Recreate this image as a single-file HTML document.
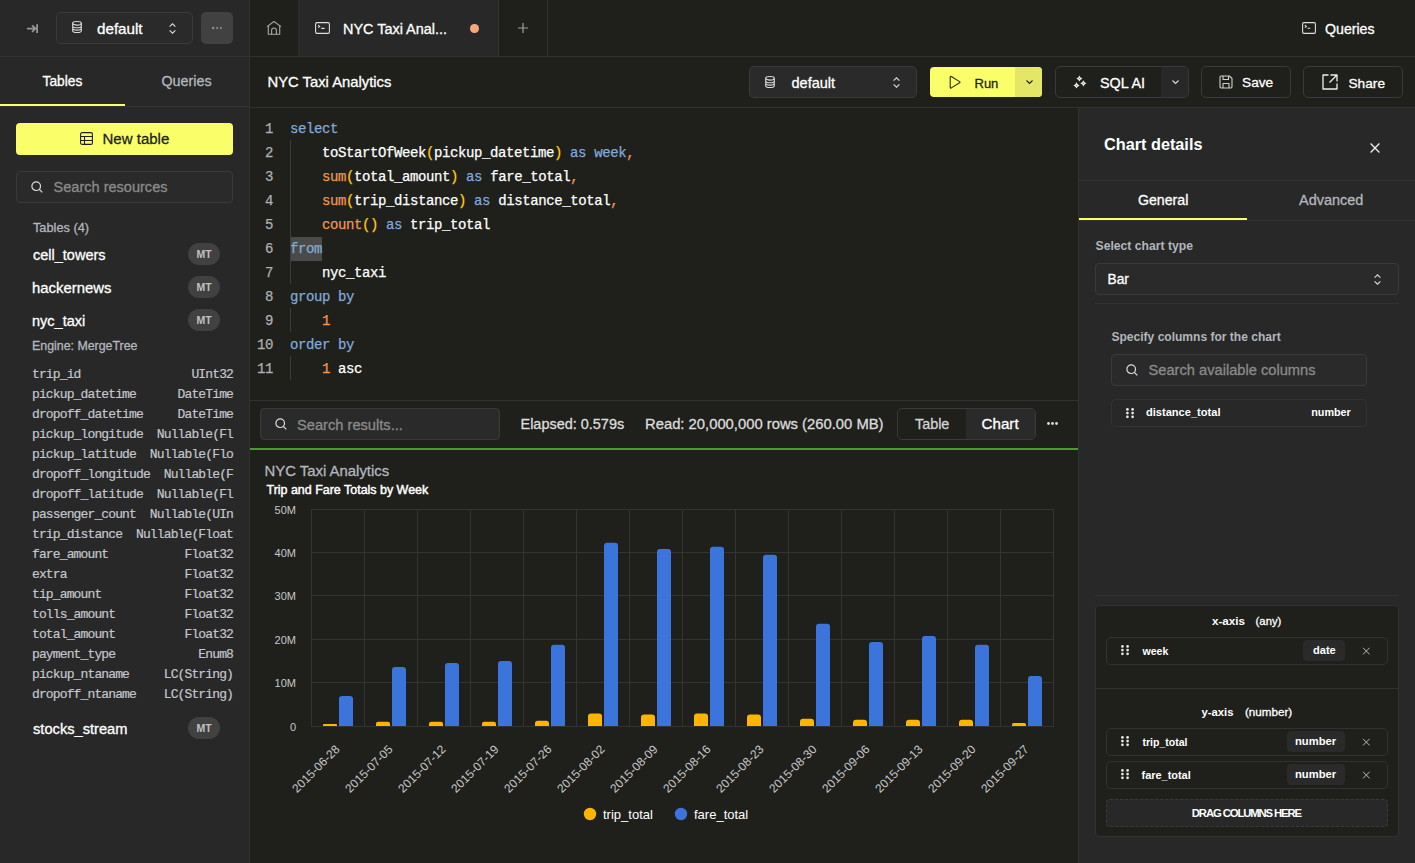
<!DOCTYPE html>
<html><head><meta charset="utf-8">
<style>
*{box-sizing:border-box;margin:0;padding:0}
html,body{width:1415px;height:863px;overflow:hidden;background:#1f1f1c;font-family:"Liberation Sans",sans-serif;color:#fff}
.a{position:absolute}
.mono{font-family:"Liberation Mono",monospace}
.t[style*="font-weight:bold"]{-webkit-text-stroke:0}
.t{position:absolute;white-space:nowrap;line-height:1;-webkit-text-stroke:0.3px currentColor}
svg{position:absolute;overflow:visible}
.mt{position:absolute;left:156px;top:0;width:32px;height:22px;border-radius:11px;background:#414141;color:#c0c0c0;font-size:10.5px;font-weight:bold;text-align:center;line-height:22px}
.col{position:absolute;left:32px;width:210px;height:16px;font-family:"Liberation Mono",monospace;font-size:13px;letter-spacing:-0.87px;line-height:16px;color:#c4c6cc;white-space:pre;-webkit-text-stroke:0.2px currentColor}
</style></head><body>

<!-- LEFT SIDEBAR -->
<div class="a" id="side" style="left:0;top:0;width:250px;height:863px;background:#282828;border-right:1px solid #323232">
  <!-- top -->
  <svg style="left:27px;top:23.5px" width="11" height="9" viewBox="0 0 11 9"><path d="M0 4.6H8.2M5.1 1.4L8.4 4.6L5.1 7.8M10.1 0.3V8.9" stroke="#959595" stroke-width="1.8" fill="none"/></svg>
  <div class="a" style="left:56px;top:12px;width:137px;height:32px;border:1px solid #3a3a3a;border-radius:5px;background:#2a2a2a"></div>
  <svg style="left:72px;top:21px" width="10" height="12" viewBox="0 0 10 12"><g stroke="#dcdcdc" stroke-width="1.1" fill="none"><ellipse cx="5" cy="2.3" rx="4.3" ry="1.8"/><path d="M0.7 2.3V9.7C0.7 10.7 2.6 11.5 5 11.5S9.3 10.7 9.3 9.7V2.3M0.7 4.9C0.7 5.9 2.6 6.7 5 6.7S9.3 5.9 9.3 4.9M0.7 7.3C0.7 8.3 2.6 9.1 5 9.1S9.3 8.3 9.3 7.3"/></g></svg>
  <div id="t1" class="t" style="left:97.0px;top:20.85px;font-size:15.18px;color:#fff">default</div>
  <svg style="left:169px;top:23px" width="7" height="11" viewBox="0 0 7 11"><path d="M0.6 3.6L3.5 0.8L6.4 3.6M0.6 7.4L3.5 10.2L6.4 7.4" stroke="#dcdcdc" stroke-width="1.1" fill="none"/></svg>
  <div class="a" style="left:201px;top:12px;width:32px;height:32px;border-radius:5px;background:#414141"></div>
  <svg style="left:210px;top:25px" width="14" height="6" viewBox="0 0 14 6"><g fill="#8e8e8e"><circle cx="3.2" cy="3" r="1.25"/><circle cx="7.1" cy="3" r="1.05"/><circle cx="10.8" cy="3" r="1.05"/></g></svg>
  <div class="a" style="left:0;top:56px;width:249px;height:1px;background:#323232"></div>

  <!-- tabs -->
  <div id="t3" class="t" style="left:42.5px;top:74.91px;font-size:13.81px;color:#fff">Tables</div>
  <div id="t4" class="t" style="left:161.5px;top:74.49px;font-size:14.31px;color:#b3b6bd">Queries</div>
  <div class="a" style="left:0;top:104px;width:125px;height:2px;background:#faff69"></div>
  <div class="a" style="left:0;top:106px;width:249px;height:1px;background:#323232"></div>

  <!-- new table -->
  <div class="a" style="left:16px;top:123px;width:217px;height:32px;border-radius:4px;background:#faff69"></div>
  <svg style="left:80px;top:132px" width="13" height="13" viewBox="0 0 13 13"><g stroke="#1f1f1c" stroke-width="1.1" fill="none"><rect x="0.6" y="0.6" width="11.8" height="11.8" rx="1.5"/><path d="M0.6 4.5H12.4M0.6 8.5H12.4M4.5 4.5V12.4"/></g></svg>
  <div id="t5" class="t" style="left:102.5px;top:131.19px;font-size:15.02px;color:#1f1f1c">New table</div>

  <!-- search -->
  <div class="a" style="left:16px;top:171px;width:217px;height:32px;border:1px solid #3a3a3a;border-radius:4px;background:#2a2a2a"></div>
  <svg style="left:31px;top:181px" width="12" height="12" viewBox="0 0 12 12"><g stroke="#dcdcdc" stroke-width="1.2" fill="none"><circle cx="5.2" cy="5.2" r="4.3"/><path d="M8.3 8.3L11.3 11.3"/></g></svg>
  <div id="t6" class="t" style="left:53.5px;top:180.17px;font-size:14.56px;color:#8a8a8a">Search resources</div>

  <div id="t7" class="t" style="left:33.0px;top:221.9px;font-size:12.76px;color:#b3b6bd">Tables (4)</div>

  <div class="a" style="left:32px;top:243px;width:189px;height:22px"><div id="t8" class="t" style="left:1.0px;top:5.43px;font-size:14.5px;color:#fff">cell_towers</div><div class="mt">MT</div></div>
  <div class="a" style="left:32px;top:276px;width:189px;height:22px"><div id="t9" class="t" style="left:-0.0px;top:4.8px;font-size:14.88px;color:#fff">hackernews</div><div class="mt">MT</div></div>
  <div class="a" style="left:32px;top:309px;width:189px;height:22px"><div id="t10" class="t" style="left:-0.0px;top:4.92px;font-size:14.51px;color:#fff">nyc_taxi</div><div class="mt">MT</div></div>
  <div id="t11" class="t" style="left:32.0px;top:340.01px;font-size:12.39px;color:#b3b6bd">Engine: MergeTree</div>
  <div class="col" style="top:367px">trip_id                UInt32</div>
  <div class="col" style="top:387px">pickup_datetime      DateTime</div>
  <div class="col" style="top:407px">dropoff_datetime     DateTime</div>
  <div class="col" style="top:427px">pickup_longitude  Nullable(Fl</div>
  <div class="col" style="top:447px">pickup_latitude  Nullable(Flo</div>
  <div class="col" style="top:467px">dropoff_longitude  Nullable(F</div>
  <div class="col" style="top:487px">dropoff_latitude  Nullable(Fl</div>
  <div class="col" style="top:507px">passenger_count  Nullable(UIn</div>
  <div class="col" style="top:527px">trip_distance  Nullable(Float</div>
  <div class="col" style="top:547px">fare_amount           Float32</div>
  <div class="col" style="top:567px">extra                 Float32</div>
  <div class="col" style="top:587px">tip_amount            Float32</div>
  <div class="col" style="top:607px">tolls_amount          Float32</div>
  <div class="col" style="top:627px">total_amount          Float32</div>
  <div class="col" style="top:647px">payment_type            Enum8</div>
  <div class="col" style="top:667px">pickup_ntaname     LC(String)</div>
  <div class="col" style="top:687px">dropoff_ntaname    LC(String)</div>
  <div class="a" style="left:32px;top:717px;width:189px;height:22px"><div id="t12" class="t" style="left:1.0px;top:5.29px;font-size:14.66px;color:#fff">stocks_stream</div><div class="mt">MT</div></div>
</div>


<!-- MAIN TOP TABS -->
<div class="a" style="left:250px;top:0;width:1165px;height:57px;border-bottom:1px solid #323232"></div>
<svg style="left:267px;top:21px" width="14" height="14" viewBox="0 0 14 14"><g stroke="#a4a4a4" stroke-width="1.15" fill="none" stroke-linejoin="round" stroke-linecap="round"><path d="M0.4 5.4L7 0.5L13.6 5.4"/><path d="M1.3 4.6V13.2H12.7V4.6"/><path d="M4.6 13.2V9.4A2.4 2.4 0 0 1 9.4 9.4V13.2"/></g></svg>
<div class="a" style="left:298px;top:0;width:201px;height:56px;background:#282828;border-left:1px solid #2e2e2e;border-right:1px solid #323232"></div>
<svg style="left:315px;top:22px" width="15" height="12" viewBox="0 0 15 12"><g stroke="#dcdcdc" stroke-width="1.1" fill="none"><rect x="0.6" y="0.6" width="13.8" height="10.8" rx="1.3"/><path d="M3.2 3.1L4.7 4.4L3.2 5.7M6.2 6.4H9.6"/></g></svg>
<div id="t13" class="t" style="left:343.0px;top:22.27px;font-size:14.45px;color:#fff">NYC Taxi Anal...</div>
<div class="a" style="left:470px;top:24px;width:8.5px;height:8.5px;border-radius:50%;background:#f6a77a"></div>
<svg style="left:518px;top:23px" width="10" height="10" viewBox="0 0 10 10"><path d="M5 0V10M0 5H10" stroke="#a0a0a0" stroke-width="1.2"/></svg>
<div class="a" style="left:547px;top:0;width:1px;height:56px;background:#323232"></div>
<svg style="left:1302px;top:22px" width="14" height="12" viewBox="0 0 14 12"><g stroke="#dcdcdc" stroke-width="1.1" fill="none"><rect x="0.6" y="0.6" width="12.8" height="10.8" rx="1.3"/><path d="M2.8 3.2L4.4 4.4L2.8 5.6M5.5 6.2H8.3"/></g></svg>
<div id="t14" class="t" style="left:1325.0px;top:21.51px;font-size:14.16px;color:#fff">Queries</div>

<!-- TOOLBAR -->
<div class="a" style="left:250px;top:107px;width:1165px;height:1px;background:#323232"></div>
<div id="t15" class="t" style="left:267.5px;top:75.16px;font-size:14.81px;color:#fff">NYC Taxi Analytics</div>

<div class="a" style="left:749px;top:66px;width:168px;height:32px;border:1px solid #3a3a3a;border-radius:5px;background:#2a2a2a"></div>
<svg style="left:765px;top:76px" width="10" height="12" viewBox="0 0 10 12"><g stroke="#dcdcdc" stroke-width="1.1" fill="none"><ellipse cx="5" cy="2.3" rx="4.3" ry="1.8"/><path d="M0.7 2.3V9.7C0.7 10.7 2.6 11.5 5 11.5S9.3 10.7 9.3 9.7V2.3M0.7 4.9C0.7 5.9 2.6 6.7 5 6.7S9.3 5.9 9.3 4.9M0.7 7.3C0.7 8.3 2.6 9.1 5 9.1S9.3 8.3 9.3 7.3"/></g></svg>
<div id="t16" class="t" style="left:791.5px;top:76.12px;font-size:14.51px;color:#fff">default</div>
<svg style="left:893px;top:77px" width="7" height="11" viewBox="0 0 7 11"><path d="M0.6 3.6L3.5 0.8L6.4 3.6M0.6 7.4L3.5 10.2L6.4 7.4" stroke="#dcdcdc" stroke-width="1.1" fill="none"/></svg>

<div class="a" style="left:930px;top:67px;width:112px;height:30px;border-radius:4px;background:#faff69;overflow:hidden"><div class="a" style="left:85px;top:0;width:27px;height:30px;background:#e3e666"></div></div>
<svg style="left:948.5px;top:74.5px" width="12" height="15" viewBox="0 0 12 15"><path d="M1.2 2.2Q1.2 0.9 2.3 1.5L10.6 6.6Q11.5 7.2 10.6 7.8L2.3 12.9Q1.2 13.5 1.2 12.2Z" stroke="#2a2a1f" stroke-width="1.1" fill="none" stroke-linejoin="round"/></svg>
<div id="t17" class="t" style="left:974.5px;top:76.5px;font-size:13.0px;color:#1f1f1c">Run</div>
<svg style="left:1026px;top:80px" width="7" height="4" viewBox="0 0 7 4"><path d="M0.5 0.5L3.5 3.5L6.5 0.5" stroke="#1f1f1c" stroke-width="1.1" fill="none"/></svg>

<div class="a" style="left:1055px;top:66px;width:134px;height:32px;border:1px solid #3a3a3a;border-radius:5px;overflow:hidden"><div class="a" style="left:105px;top:0;width:28px;height:30px;background:#282828"></div></div>
<svg style="left:1070px;top:72px" width="18" height="18" viewBox="0 0 18 18"><path d="M9.4 3.4Q10.15 5.75 12.5 6.5Q10.15 7.25 9.4 9.6Q8.65 7.25 6.300000000000001 6.5Q8.65 5.75 9.4 3.4Z" fill="#ececec"/><circle cx="9.4" cy="6.5" r="0.45" fill="#1f1f1c"/><path d="M13.4 8.200000000000001Q14.15 10.55 16.5 11.3Q14.15 12.05 13.4 14.4Q12.65 12.05 10.3 11.3Q12.65 10.55 13.4 8.200000000000001Z" fill="#ececec"/><circle cx="13.4" cy="11.3" r="0.45" fill="#1f1f1c"/><path d="M6.5 10.3Q7.25 12.65 9.6 13.4Q7.25 14.15 6.5 16.5Q5.75 14.15 3.4 13.4Q5.75 12.65 6.5 10.3Z" fill="#ececec"/><circle cx="6.5" cy="13.4" r="0.45" fill="#1f1f1c"/></svg>
<div id="t18" class="t" style="left:1100.0px;top:75.54px;font-size:14.36px;color:#fff">SQL AI</div>
<svg style="left:1172px;top:80px" width="7" height="4" viewBox="0 0 7 4"><path d="M0.5 0.5L3.5 3.5L6.5 0.5" stroke="#dcdcdc" stroke-width="1.1" fill="none"/></svg>

<div class="a" style="left:1201px;top:66px;width:90px;height:32px;border:1px solid #3a3a3a;border-radius:5px"></div>
<svg style="left:1219px;top:75px" width="14" height="14" viewBox="0 0 14 14"><g stroke="#cfcfcf" stroke-width="1.1" fill="none" stroke-linejoin="round"><path d="M1 2.2C1 1.5 1.5 1 2.2 1H10.5L13 3.5V11.8C13 12.5 12.5 13 11.8 13H2.2C1.5 13 1 12.5 1 11.8Z"/><path d="M4 1V4.5H9.5V1M4 13V8.5H10V13"/></g></svg>
<div id="t19" class="t" style="left:1242.0px;top:76.21px;font-size:13.69px;color:#fff">Save</div>

<div class="a" style="left:1303px;top:66px;width:100px;height:32px;border:1px solid #3a3a3a;border-radius:5px"></div>
<svg style="left:1322px;top:74px" width="16" height="16" viewBox="0 0 16 16"><g stroke="#f0f0f0" stroke-width="1.3" fill="none" stroke-linejoin="round"><path d="M6.5 1H1V15H15V9.5"/><path d="M8.5 1H15V7.5M15 1L7.5 8.5"/></g></svg>
<div id="t20" class="t" style="left:1348.5px;top:77.12px;font-size:13.68px;color:#fff">Share</div>

<!-- EDITOR -->
<div class="a mono" style="left:250px;top:117px;width:828px;height:280px;font-size:14px;letter-spacing:-0.4px;line-height:24px;color:#fff;white-space:pre;-webkit-text-stroke:0.25px currentColor">
<div class="a" style="left:0;top:0px;width:23px;text-align:right;color:#b0b0b0">1</div><div class="a" style="left:40px;top:0px"><span style="color:#82aad8">select</span></div>
<div class="a" style="left:0;top:24px;width:23px;text-align:right;color:#b0b0b0">2</div><div class="a" style="left:40px;top:24px">    toStartOfWeek<span style="color:#ffcc00">(</span>pickup_datetime<span style="color:#ffcc00">)</span> <span style="color:#82aad8">as</span> <span style="color:#82aad8">week</span><span style="color:#f09657">,</span></div>
<div class="a" style="left:0;top:48px;width:23px;text-align:right;color:#b0b0b0">3</div><div class="a" style="left:40px;top:48px">    <span style="color:#f09657">sum</span><span style="color:#ffcc00">(</span>total_amount<span style="color:#ffcc00">)</span> <span style="color:#82aad8">as</span> fare_total<span style="color:#f09657">,</span></div>
<div class="a" style="left:0;top:72px;width:23px;text-align:right;color:#b0b0b0">4</div><div class="a" style="left:40px;top:72px">    <span style="color:#f09657">sum</span><span style="color:#ffcc00">(</span>trip_distance<span style="color:#ffcc00">)</span> <span style="color:#82aad8">as</span> distance_total<span style="color:#f09657">,</span></div>
<div class="a" style="left:0;top:96px;width:23px;text-align:right;color:#b0b0b0">5</div><div class="a" style="left:40px;top:96px">    <span style="color:#f09657">count</span><span style="color:#ffcc00">()</span> <span style="color:#82aad8">as</span> trip_total</div>
<div class="a" style="left:0;top:120px;width:23px;text-align:right;color:#b0b0b0">6</div><div class="a" style="left:40px;top:120px"><span style="color:#82aad8;background:#4a4a4a;display:inline-block;height:24px;width:32px">from</span></div>
<div class="a" style="left:0;top:144px;width:23px;text-align:right;color:#b0b0b0">7</div><div class="a" style="left:40px;top:144px">    nyc_taxi</div>
<div class="a" style="left:0;top:168px;width:23px;text-align:right;color:#b0b0b0">8</div><div class="a" style="left:40px;top:168px"><span style="color:#82aad8">group by</span></div>
<div class="a" style="left:0;top:192px;width:23px;text-align:right;color:#b0b0b0">9</div><div class="a" style="left:40px;top:192px">    <span style="color:#f09657">1</span></div>
<div class="a" style="left:0;top:216px;width:23px;text-align:right;color:#b0b0b0">10</div><div class="a" style="left:40px;top:216px"><span style="color:#82aad8">order by</span></div>
<div class="a" style="left:0;top:240px;width:23px;text-align:right;color:#b0b0b0">11</div><div class="a" style="left:40px;top:240px">    <span style="color:#f09657">1</span> asc</div>
</div>
<div class="a" style="left:290px;top:140px;width:1px;height:144px;background:#3c3c3c"></div>
<div class="a" style="left:290px;top:308px;width:1px;height:24px;background:#3c3c3c"></div>
<div class="a" style="left:290px;top:356px;width:1px;height:24px;background:#3c3c3c"></div>

<!-- RESULTS BAR -->
<div class="a" style="left:250px;top:400px;width:828px;height:1px;background:#323232"></div>
<div class="a" style="left:260px;top:408px;width:240px;height:32px;border:1px solid #3a3a3a;border-radius:4px;background:#2a2a2a"></div>
<svg style="left:275px;top:418px" width="12" height="12" viewBox="0 0 12 12"><g stroke="#dcdcdc" stroke-width="1.2" fill="none"><circle cx="5.2" cy="5.2" r="4.3"/><path d="M8.3 8.3L11.3 11.3"/></g></svg>
<div id="t21" class="t" style="left:297.0px;top:418.08px;font-size:14.67px;color:#8a8a8a">Search results...</div>
<div id="t22" class="t" style="left:520.5px;top:417.26px;font-size:14.46px;color:#dcdcdc">Elapsed: 0.579s</div>
<div id="t23" class="t" style="left:645.0px;top:416.96px;font-size:14.81px;color:#dcdcdc">Read: 20,000,000 rows (260.00 MB)</div>
<div class="a" style="left:897px;top:408px;width:139px;height:32px;border:1px solid #3a3a3a;border-radius:5px;overflow:hidden"><div class="a" style="left:68px;top:0;width:70px;height:30px;background:#2a2a2a"></div></div>
<div id="t24" class="t" style="left:915.0px;top:417.33px;font-size:14.38px;color:#d4d4d4">Table</div>
<div id="t25" class="t" style="left:981.5px;top:416.23px;font-size:15.2px;color:#fff">Chart</div>
<svg style="left:1047px;top:422px" width="11" height="3" viewBox="0 0 11 3"><g fill="#dcdcdc"><circle cx="1.5" cy="1.5" r="1.4"/><circle cx="5.5" cy="1.5" r="1.4"/><circle cx="9.5" cy="1.5" r="1.4"/></g></svg>
<div class="a" style="left:250px;top:448px;width:828px;height:2px;background:#449d2c"></div>
<div class="a" style="left:1078px;top:108px;width:1px;height:755px;background:#323232"></div>

<!-- CHART -->
<div id="t26" class="t" style="left:264.5px;top:463.89px;font-size:14.9px;color:#b3b6bd">NYC Taxi Analytics</div>
<div id="t27" class="t" style="left:266.5px;top:483.75px;font-size:12.46px;color:#fff;-webkit-text-stroke:0.45px #fff">Trip and Fare Totals by Week</div>
<svg style="left:0;top:0" width="1415" height="863" viewBox="0 0 1415 863">
<g stroke="#333331" stroke-width="1" fill="none"><path d="M311.5 509V727"/><path d="M364.5 509V727"/><path d="M417.5 509V727"/><path d="M470.5 509V727"/><path d="M523.5 509V727"/><path d="M576.5 509V727"/><path d="M629.5 509V727"/><path d="M682.5 509V727"/><path d="M735.5 509V727"/><path d="M788.5 509V727"/><path d="M841.5 509V727"/><path d="M894.5 509V727"/><path d="M947.5 509V727"/><path d="M1000.5 509V727"/><path d="M1053.5 509V727"/><path d="M311 509.5H1054"/><path d="M311 552.5H1054"/><path d="M311 595.5H1054"/><path d="M311 639.5H1054"/><path d="M311 682.5H1054"/><path d="M311 726.5H1054"/></g>
<path d="M339 726V699.00Q339 696 342.00 696H350.00Q353 696 353 699.00V726Z" fill="#3b75dc"/><path d="M323 726V725.00Q323 724 324.00 724H336.00Q337 724 337 725.00V726Z" fill="#ffb400"/><path d="M392 726V669.90Q392 666.9 395.00 666.9H403.00Q406 666.9 406 669.90V726Z" fill="#3b75dc"/><path d="M376 726V723.85Q376 721.7 378.15 721.7H387.85Q390 721.7 390 723.85V726Z" fill="#ffb400"/><path d="M445 726V666.00Q445 663 448.00 663H456.00Q459 663 459 666.00V726Z" fill="#3b75dc"/><path d="M429 726V723.85Q429 721.7 431.15 721.7H440.85Q443 721.7 443 723.85V726Z" fill="#ffb400"/><path d="M498 726V664.00Q498 661 501.00 661H509.00Q512 661 512 664.00V726Z" fill="#3b75dc"/><path d="M482 726V723.85Q482 721.7 484.15 721.7H493.85Q496 721.7 496 723.85V726Z" fill="#ffb400"/><path d="M551 726V647.80Q551 644.8 554.00 644.8H562.00Q565 644.8 565 647.80V726Z" fill="#3b75dc"/><path d="M535 726V723.35Q535 720.7 537.65 720.7H546.35Q549 720.7 549 723.35V726Z" fill="#ffb400"/><path d="M604 726V545.80Q604 542.8 607.00 542.8H615.00Q618 542.8 618 545.80V726Z" fill="#3b75dc"/><path d="M588 726V716.40Q588 713.4 591.00 713.4H599.00Q602 713.4 602 716.40V726Z" fill="#ffb400"/><path d="M657 726V552.00Q657 549 660.00 549H668.00Q671 549 671 552.00V726Z" fill="#3b75dc"/><path d="M641 726V717.40Q641 714.4 644.00 714.4H652.00Q655 714.4 655 717.40V726Z" fill="#ffb400"/><path d="M710 726V549.80Q710 546.8 713.00 546.8H721.00Q724 546.8 724 549.80V726Z" fill="#3b75dc"/><path d="M694 726V716.50Q694 713.5 697.00 713.5H705.00Q708 713.5 708 716.50V726Z" fill="#ffb400"/><path d="M763 726V557.70Q763 554.7 766.00 554.7H774.00Q777 554.7 777 557.70V726Z" fill="#3b75dc"/><path d="M747 726V717.50Q747 714.5 750.00 714.5H758.00Q761 714.5 761 717.50V726Z" fill="#ffb400"/><path d="M816 726V626.70Q816 623.7 819.00 623.7H827.00Q830 623.7 830 626.70V726Z" fill="#3b75dc"/><path d="M800 726V721.80Q800 718.8 803.00 718.8H811.00Q814 718.8 814 721.80V726Z" fill="#ffb400"/><path d="M869 726V644.90Q869 641.9 872.00 641.9H880.00Q883 641.9 883 644.90V726Z" fill="#3b75dc"/><path d="M853 726V722.80Q853 719.8 856.00 719.8H864.00Q867 719.8 867 722.80V726Z" fill="#ffb400"/><path d="M922 726V638.90Q922 635.9 925.00 635.9H933.00Q936 635.9 936 638.90V726Z" fill="#3b75dc"/><path d="M906 726V722.80Q906 719.8 909.00 719.8H917.00Q920 719.8 920 722.80V726Z" fill="#ffb400"/><path d="M975 726V647.80Q975 644.8 978.00 644.8H986.00Q989 644.8 989 647.80V726Z" fill="#3b75dc"/><path d="M959 726V722.80Q959 719.8 962.00 719.8H970.00Q973 719.8 973 722.80V726Z" fill="#ffb400"/><path d="M1028 726V678.90Q1028 675.9 1031.00 675.9H1039.00Q1042 675.9 1042 678.90V726Z" fill="#3b75dc"/><path d="M1012 726V724.45Q1012 722.9 1013.55 722.9H1024.45Q1026 722.9 1026 724.45V726Z" fill="#ffb400"/>
<g font-family="Liberation Sans" font-size="11" fill="#c8c8c8" text-anchor="end"><text x="296" y="513.5">50M</text><text x="296" y="556.5">40M</text><text x="296" y="599.5">30M</text><text x="296" y="643.5">20M</text><text x="296" y="686.5">10M</text><text x="296" y="730.5">0</text></g>
<g font-family="Liberation Sans" font-size="12" fill="#c8c8c8" text-anchor="end"><text transform="translate(340.5 750) rotate(-45)">2015-06-28</text><text transform="translate(393.5 750) rotate(-45)">2015-07-05</text><text transform="translate(446.5 750) rotate(-45)">2015-07-12</text><text transform="translate(499.5 750) rotate(-45)">2015-07-19</text><text transform="translate(552.5 750) rotate(-45)">2015-07-26</text><text transform="translate(605.5 750) rotate(-45)">2015-08-02</text><text transform="translate(658.5 750) rotate(-45)">2015-08-09</text><text transform="translate(711.5 750) rotate(-45)">2015-08-16</text><text transform="translate(764.5 750) rotate(-45)">2015-08-23</text><text transform="translate(817.5 750) rotate(-45)">2015-08-30</text><text transform="translate(870.5 750) rotate(-45)">2015-09-06</text><text transform="translate(923.5 750) rotate(-45)">2015-09-13</text><text transform="translate(976.5 750) rotate(-45)">2015-09-20</text><text transform="translate(1029.5 750) rotate(-45)">2015-09-27</text></g>
<circle cx="590" cy="814" r="6.2" fill="#ffb400"/><circle cx="681" cy="814" r="6.2" fill="#3b75dc"/><g font-family="Liberation Sans" font-size="13" fill="#fff"><text x="603" y="819">trip_total</text><text x="694" y="819">fare_total</text></g></svg>


<!-- RIGHT PANEL -->
<div class="a" style="left:1079px;top:108px;width:336px;height:755px;background:#282828"></div>
<div id="t28" class="t" style="left:1104.0px;top:135.74px;font-size:16.25px;font-weight:bold;color:#fff">Chart details</div>
<svg style="left:1370px;top:143px" width="10" height="10" viewBox="0 0 10 10"><path d="M0.6 0.6L9.4 9.4M9.4 0.6L0.6 9.4" stroke="#e8e8e8" stroke-width="1.4"/></svg>
<div class="a" style="left:1079px;top:180px;width:336px;height:1px;background:#323232"></div>
<div id="t29" class="t" style="left:1138.0px;top:193.42px;font-size:14.15px;color:#fff">General</div>
<div id="t30" class="t" style="left:1299.0px;top:193.18px;font-size:14.44px;color:#b3b6bd">Advanced</div>
<div class="a" style="left:1079px;top:218px;width:168px;height:2px;background:#faff69"></div>
<div class="a" style="left:1079px;top:220px;width:336px;height:1px;background:#323232"></div>

<div id="t31" class="t" style="left:1095.5px;top:240.38px;font-size:12.19px;font-weight:bold;color:#b3b6bd">Select chart type</div>
<div class="a" style="left:1095px;top:263px;width:304px;height:32px;border:1px solid #3a3a3a;border-radius:4px;background:#2a2a2a"></div>
<div id="t32" class="t" style="left:1107.5px;top:273.14px;font-size:13.77px;color:#fff">Bar</div>
<svg style="left:1374px;top:274px" width="7" height="11" viewBox="0 0 7 11"><path d="M0.6 3.6L3.5 0.8L6.4 3.6M0.6 7.4L3.5 10.2L6.4 7.4" stroke="#dcdcdc" stroke-width="1.1" fill="none"/></svg>
<div class="a" style="left:1095px;top:303px;width:304px;height:1px;background:#323232"></div>

<div id="t33" class="t" style="left:1111.5px;top:331.11px;font-size:12.04px;font-weight:bold;color:#b3b6bd">Specify columns for the chart</div>
<div class="a" style="left:1111px;top:354px;width:256px;height:32px;border:1px solid #3a3a3a;border-radius:4px;background:#2a2a2a"></div>
<svg style="left:1126px;top:364px" width="12" height="12" viewBox="0 0 12 12"><g stroke="#dcdcdc" stroke-width="1.2" fill="none"><circle cx="5.2" cy="5.2" r="4.3"/><path d="M8.3 8.3L11.3 11.3"/></g></svg>
<div id="t34" class="t" style="left:1148.5px;top:363.49px;font-size:14.66px;color:#8a8a8a">Search available columns</div>
<div class="a" style="left:1111px;top:399px;width:256px;height:28px;border:1px solid #323232;border-radius:4px"></div>
<svg style="left:1126px;top:408px" width="8" height="11" viewBox="0 0 8 11"><g fill="#e8e8e8"><circle cx="1.4" cy="1.4" r="1.35"/><circle cx="6.6" cy="1.4" r="1.35"/><circle cx="1.4" cy="5.1" r="1.35"/><circle cx="6.6" cy="5.1" r="1.35"/><circle cx="1.4" cy="8.8" r="1.35"/><circle cx="6.6" cy="8.8" r="1.35"/></g></svg>
<div id="t35" class="t" style="left:1146.0px;top:406.72px;font-size:11.08px;font-weight:bold;color:#fff">distance_total</div>
<div id="t36" class="t" style="left:1311.2px;top:406.95px;font-size:10.81px;font-weight:bold;color:#fff">number</div>

<div class="a" style="left:1095px;top:595px;width:304px;height:1px;background:#323232"></div>
<div class="a" style="left:1095px;top:605px;width:304px;height:232px;border:1px solid #323232;border-radius:4px;background:#1f1f1c"></div>
<div id="t37" class="t" style="left:1212.0px;top:614.84px;font-size:11.65px;font-weight:bold;color:#fff">x-axis</div>
<div id="t38" class="t" style="left:1255.6px;top:615.6px;font-size:11.3px;color:#fff">(any)</div>
<div class="a" style="left:1106px;top:637px;width:282px;height:28px;border:1px solid #323232;border-radius:5px"></div>
<svg style="left:1121px;top:645px" width="8" height="11" viewBox="0 0 8 11"><g fill="#e8e8e8"><circle cx="1.4" cy="1.4" r="1.35"/><circle cx="6.6" cy="1.4" r="1.35"/><circle cx="1.4" cy="5.1" r="1.35"/><circle cx="6.6" cy="5.1" r="1.35"/><circle cx="1.4" cy="8.8" r="1.35"/><circle cx="6.6" cy="8.8" r="1.35"/></g></svg>
<div id="t39" class="t" style="left:1142.5px;top:646.17px;font-size:10.55px;font-weight:bold;color:#fff">week</div>
<div class="a" style="left:1303px;top:640px;width:42px;height:21px;border-radius:4px;background:#2a2a2a"></div>
<div id="t40" class="t" style="left:1313.0px;top:644.75px;font-size:11.05px;font-weight:bold;color:#fff">date</div>
<svg style="left:1362px;top:647px" width="8" height="8" viewBox="0 0 8 8"><path d="M1 0.8L7.6 7.4M7.6 0.8L1 7.4" stroke="#b8b8b8" stroke-width="1"/></svg>
<div class="a" style="left:1096px;top:688px;width:302px;height:1px;background:#323232"></div>
<div id="t41" class="t" style="left:1201.5px;top:707.23px;font-size:11.31px;font-weight:bold;color:#fff">y-axis</div>
<div id="t42" class="t" style="left:1245.0px;top:706.06px;font-size:11.63px;color:#fff">(number)</div>
<div class="a" style="left:1106px;top:728px;width:282px;height:28px;border:1px solid #323232;border-radius:5px"></div>
<svg style="left:1121px;top:736px" width="8" height="11" viewBox="0 0 8 11"><g fill="#e8e8e8"><circle cx="1.4" cy="1.4" r="1.35"/><circle cx="6.6" cy="1.4" r="1.35"/><circle cx="1.4" cy="5.1" r="1.35"/><circle cx="6.6" cy="5.1" r="1.35"/><circle cx="1.4" cy="8.8" r="1.35"/><circle cx="6.6" cy="8.8" r="1.35"/></g></svg>
<div id="t43" class="t" style="left:1142.5px;top:737.19px;font-size:10.52px;font-weight:bold;color:#fff">trip_total</div>
<div class="a" style="left:1287px;top:731px;width:58px;height:21px;border-radius:4px;background:#2a2a2a"></div>
<div id="t44" class="t" style="left:1295.0px;top:736.41px;font-size:11.21px;font-weight:bold;color:#fff">number</div>
<svg style="left:1362px;top:738px" width="8" height="8" viewBox="0 0 8 8"><path d="M1 0.8L7.6 7.4M7.6 0.8L1 7.4" stroke="#b8b8b8" stroke-width="1"/></svg>
<div class="a" style="left:1106px;top:761px;width:282px;height:28px;border:1px solid #323232;border-radius:5px"></div>
<svg style="left:1121px;top:769px" width="8" height="11" viewBox="0 0 8 11"><g fill="#e8e8e8"><circle cx="1.4" cy="1.4" r="1.35"/><circle cx="6.6" cy="1.4" r="1.35"/><circle cx="1.4" cy="5.1" r="1.35"/><circle cx="6.6" cy="5.1" r="1.35"/><circle cx="1.4" cy="8.8" r="1.35"/><circle cx="6.6" cy="8.8" r="1.35"/></g></svg>
<div id="t45" class="t" style="left:1141.5px;top:770.44px;font-size:10.94px;font-weight:bold;color:#fff">fare_total</div>
<div class="a" style="left:1287px;top:764px;width:58px;height:21px;border-radius:4px;background:#2a2a2a"></div>
<div id="t46" class="t" style="left:1295.0px;top:769.21px;font-size:11.21px;font-weight:bold;color:#fff">number</div>
<svg style="left:1362px;top:771px" width="8" height="8" viewBox="0 0 8 8"><path d="M1 0.8L7.6 7.4M7.6 0.8L1 7.4" stroke="#b8b8b8" stroke-width="1"/></svg>
<div class="a" style="left:1106px;top:799px;width:282px;height:28px;border:1px dashed #3a3a3a;border-radius:4px;background:#282828"></div>
<div id="t47" class="t" style="left:1191.8px;top:807.93px;font-size:11.3px;font-weight:bold;letter-spacing:-1.107px;color:#fff">DRAG COLUMNS HERE</div>

</body></html>
